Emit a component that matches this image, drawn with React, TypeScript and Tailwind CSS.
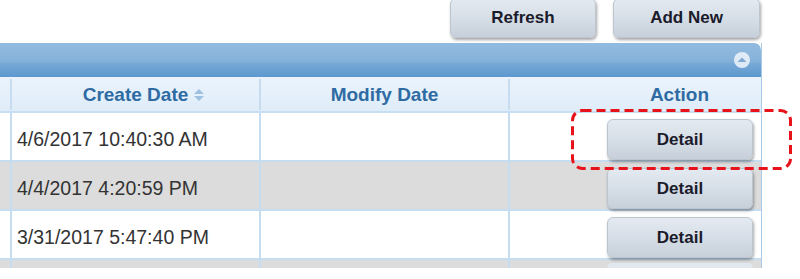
import React from "react";

const rows = [
  { created: "4/6/2017 10:40:30 AM", alt: false },
  { created: "4/4/2017 4:20:59 PM", alt: true },
  { created: "3/31/2017 5:47:40 PM", alt: false },
];

function GrayButton({ label, className = "" }: { label: string; className?: string }) {
  return (
    <button
      className={`flex items-center justify-center rounded-[6px] border border-[#bcc6d0] bg-gradient-to-b from-[#e4eaf1] via-[#d6dee7] to-[#c7d0da] text-[17px] font-bold text-[#1b1b2b] shadow-[1px_2px_3px_rgba(0,0,0,0.35)] ${className}`}
    >
      {label}
    </button>
  );
}

function SortIcon() {
  return (
    <svg width="12" height="16" viewBox="0 0 12 16" className="absolute left-full top-1/2 ml-[5px] -translate-y-1/2">
      <path d="M1 7 L6 2 L11 7 Z" fill="#9fc0e0" />
      <path d="M1 9 L6 14 L11 9 Z" fill="#9fc0e0" />
    </svg>
  );
}

function CollapseIcon() {
  return (
    <svg width="18" height="18" viewBox="0 0 18 18">
      <circle cx="9" cy="9" r="8" fill="#e9f1f9" fillOpacity="0.9" />
      <path d="M4.5 11 L9 6.5 L13.5 11 Z" fill="#7fa9d2" />
    </svg>
  );
}

export default function App() {
  return (
    <div
      className="relative w-[800px] h-[279px] overflow-hidden bg-white"
      style={{ fontFamily: '"Liberation Sans", Arial, sans-serif' }}
    >
      {/* toolbar */}
      <div className="flex justify-end gap-[17px] pr-[40px] -mt-[2px]">
        <GrayButton label="Refresh" className="w-[146px] h-[40px]" />
        <GrayButton label="Add New" className="w-[147px] h-[40px]" />
      </div>

      {/* grid */}
      <div className="mt-[5px] w-[762px] border-r border-[#a9c9e6]">
        <div className="relative flex h-[34px] items-center justify-end overflow-hidden rounded-tr-[7px] bg-gradient-to-b from-[#93bbe0] via-[#86b2da] to-[#5f9bd0] pr-[10px]">
          <div className="absolute left-0 right-0 bottom-0 h-[14px] bg-gradient-to-b from-[#77a9d6] to-[#5c98ce]" />
          <div className="relative">
            <CollapseIcon />
          </div>
        </div>

        <div className="grid h-[36px] grid-cols-[12px_249px_249px_1fr] border-b-2 border-[#c8def2] bg-gradient-to-b from-[#eaf3fc] to-[#dfedf9] text-[19px] font-bold text-[#2f6ba3]">
          <div className="border-r-2 border-[#c7dcef] my-[2px]" />
          <div className="flex items-center justify-center border-r-2 border-[#c7dcef] my-[2px] pt-[2px]">
            <span className="relative">
              Create Date
              <SortIcon />
            </span>
          </div>
          <div className="flex items-center justify-center border-r-2 border-[#c7dcef] my-[2px] pt-[2px]">
            Modify Date
          </div>
          <div className="flex items-center justify-end pr-[52px] pt-[2px]">Action</div>
        </div>

        {rows.map((r, i) => (
          <div
            key={i}
            className={`grid h-[49px] grid-cols-[12px_249px_249px_1fr] border-b-2 border-[#c6dcf0] text-[19.5px] text-[#333333] ${
              r.alt ? "bg-[#dcdcdc]" : "bg-white"
            }`}
          >
            <div className="border-r-2 border-[#c6dcf0]" />
            <div className="flex items-center pl-[5px] pt-[7px] border-r-2 border-[#c6dcf0]">{r.created}</div>
            <div className="border-r-2 border-[#c6dcf0]" />
            <div className="flex items-start justify-end pr-[8px] pt-[6px]">
              <GrayButton label="Detail" className="w-[146px] h-[41px]" />
            </div>
          </div>
        ))}

        <div className="grid h-[8px] grid-cols-[12px_249px_249px_1fr] bg-[#dcdcdc]">
          <div className="border-r-2 border-[#c6dcf0]" />
          <div className="border-r-2 border-[#c6dcf0]" />
          <div className="border-r-2 border-[#c6dcf0]" />
          <div className="flex justify-end pr-[8px]">
            <div className="mt-[3px] w-[146px] rounded-t-[6px] bg-[#e2e8ef]" />
          </div>
        </div>
      </div>

      {/* highlight */}
      <svg
        className="absolute left-[571px] top-[109px]"
        width="221"
        height="61"
        viewBox="0 0 221 61"
      >
        <rect
          x="1.5"
          y="1.5"
          width="218"
          height="58"
          rx="10"
          fill="none"
          stroke="#e8121a"
          strokeWidth="3"
          strokeDasharray="9 5"
        />
      </svg>
    </div>
  );
}
